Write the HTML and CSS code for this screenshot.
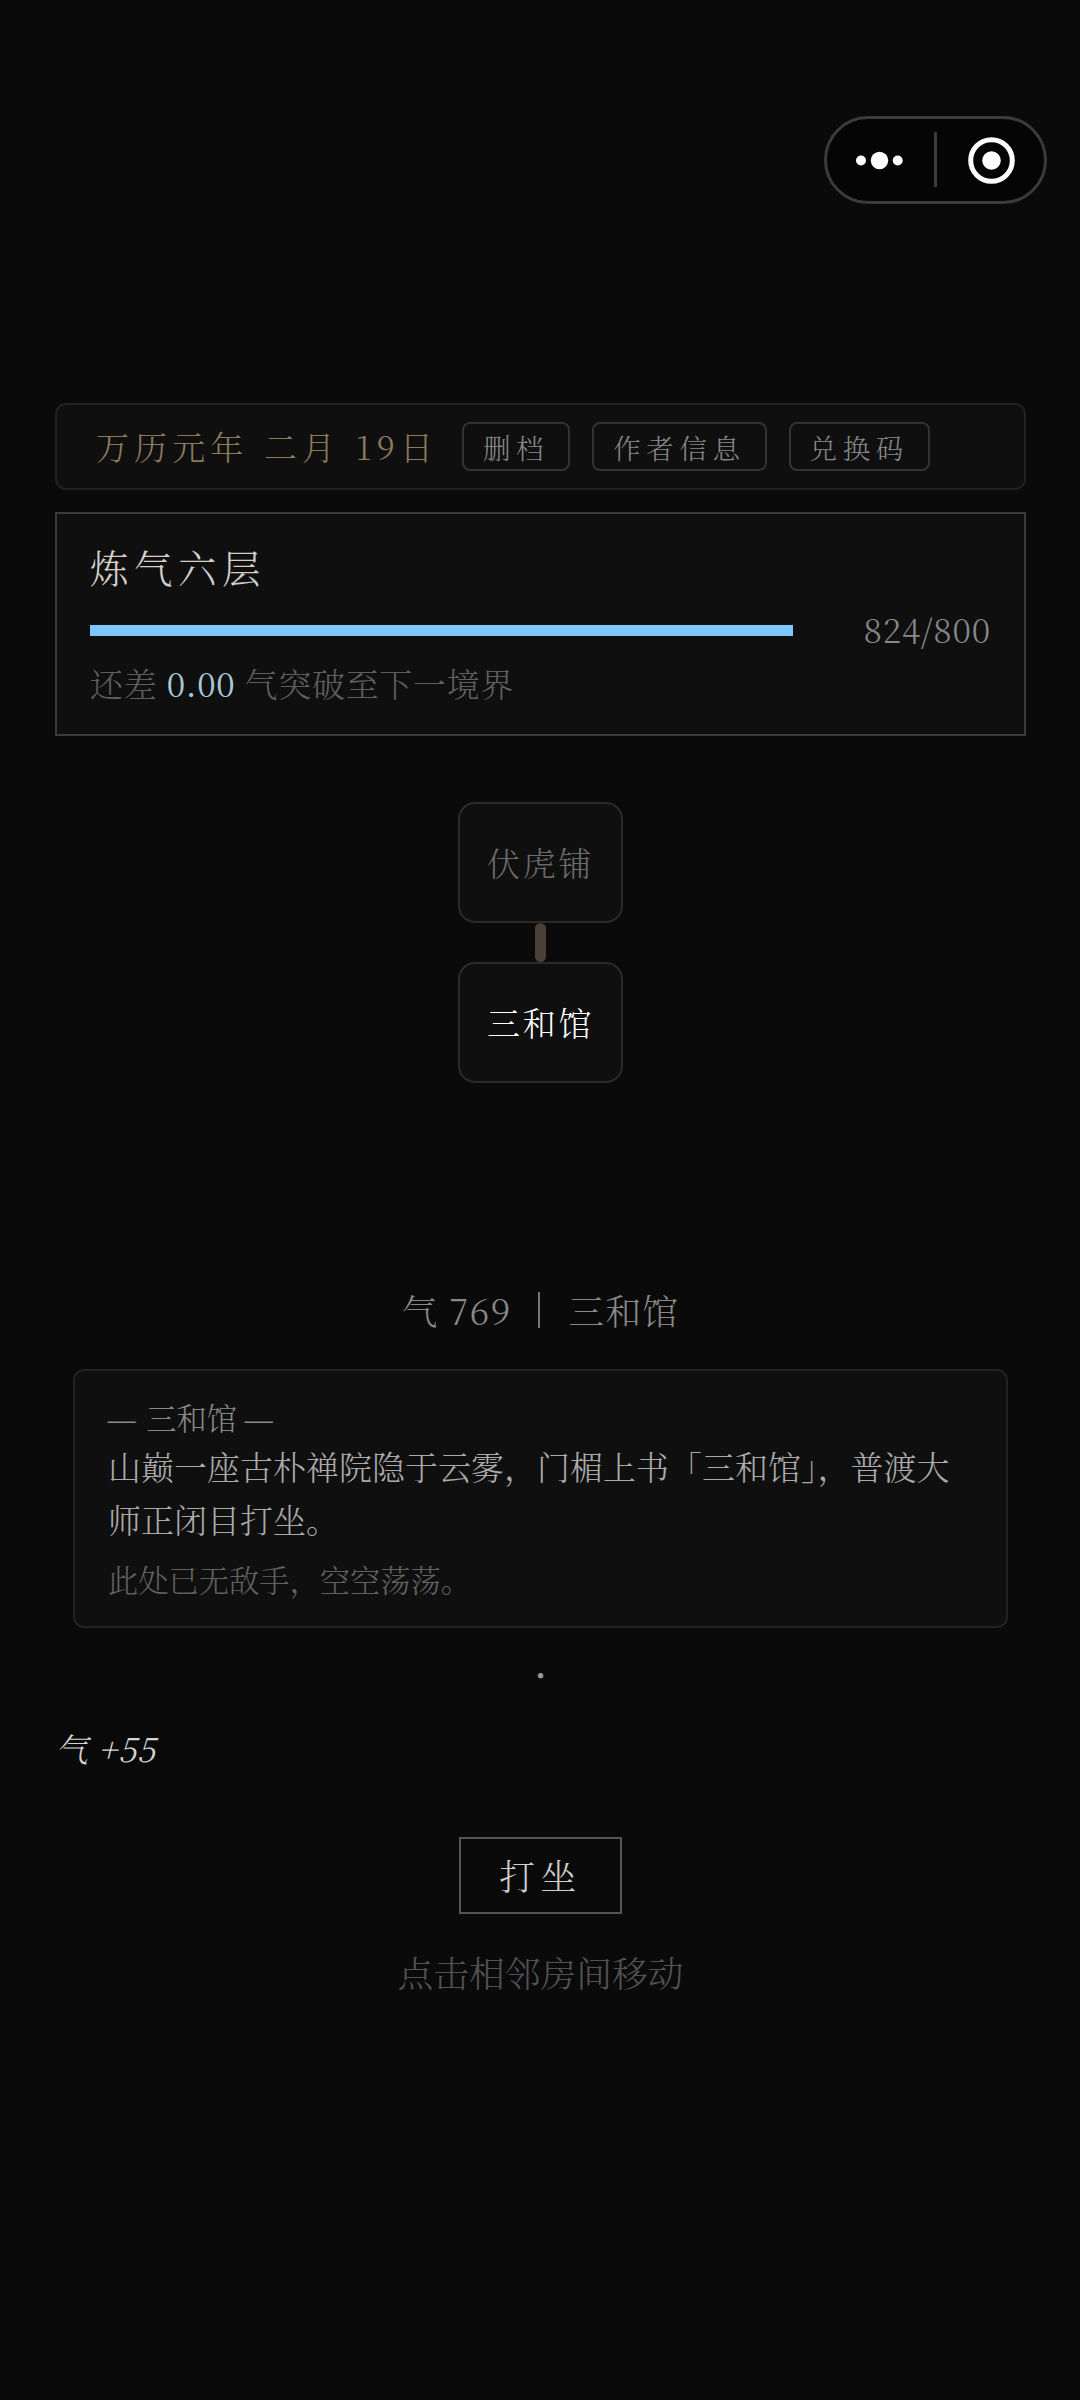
FILE: index.html
```html
<!DOCTYPE html>
<html lang="zh-CN">
<head>
<meta charset="utf-8">
<title>三和馆</title>
<link rel="stylesheet" href="styles.css">
</head>
<body>
<header class="top">
  <div class="capsule">
    <svg width="223" height="88" viewBox="0 0 223 88">
      <rect class="capsule-shell" x="1.5" y="1.5" width="220" height="85" rx="42.5"/>
      <path class="capsule-line" d="M111.5 16v55"/>
      <g class="capsule-dots"><circle cx="37" cy="44.5" r="5"/><circle cx="55.5" cy="44.5" r="8.7"/><circle cx="73.7" cy="44.5" r="5"/><circle cx="167.5" cy="44.5" r="9.3"/></g>
      <circle class="capsule-ring" cx="167.5" cy="44.5" r="20.8"/>
    </svg>
  </div>
</header>
<main class="game">
  <section class="calendar">
    <span class="date">万历元年 二月 19日</span>
    <button class="chip">删档</button>
    <button class="chip">作者信息</button>
    <button class="chip">兑换码</button>
  </section>
  <section class="realm">
    <h1 class="realm-name">炼气六层</h1>
    <div class="progress"><div class="bar"></div><span class="amount">824/800</span></div>
    <p class="remain">还差 <b class="need">0.00</b> 气突破至下一境界</p>
  </section>
  <section class="map">
    <div class="room">伏虎铺</div>
    <div class="path"></div>
    <div class="room current">三和馆</div>
  </section>
  <p class="status"><span>气 769</span><i class="rule"></i><span>三和馆</span></p>
  <section class="scene">
    <p class="scene-name"><span class="dash">—</span> 三和馆 <span class="dash">—</span></p>
    <p class="scene-text">山巅一座古朴禅院隐于云雾，门楣上书「三和馆」，普渡大师正闭目打坐。</p>
    <p class="scene-note">此处已无敌手，空空荡荡。</p>
  </section>
  <p class="pulse">·</p>
  <p class="gain">气 +55</p>
  <button class="sit">打坐</button>
  <p class="hint">点击相邻房间移动</p>
</main>
</body>
</html>
```
FILE: styles.css
```css
* { box-sizing: border-box; margin: 0; padding: 0; }
body {
  min-height: 2400px;
  background: #0a0a0a;
  color: #888;
  font-family: "Noto Serif CJK SC", "Noto Serif SC", "Noto Sans CJK SC", serif;
  font-size: 33px;
  font-weight: 300;
  line-height: 50px;
  white-space: nowrap;
}
button { background: none; font: inherit; color: inherit; }
.top { display: flex; justify-content: flex-end; height: 403px; padding: 116px 33px 0 0; }
.capsule { height: 88px; }
.capsule svg { display: block; }
.capsule-shell { fill: #050505; stroke: #3b3b3b; stroke-width: 3; }
.capsule-line { fill: none; stroke: #3b3b3b; stroke-width: 3; }
.capsule-dots { fill: #fff; }
.capsule-ring { fill: none; stroke: #fff; stroke-width: 5; }
.game { display: flex; flex-direction: column; align-items: center; padding: 0 54px 0 55px; }
.calendar {
  display: flex; align-items: center; align-self: stretch;
  height: 87px; padding-left: 39px;
  border: 2px solid #222; border-radius: 11px; background: #0f0f0f;
}
.date { width: 366px; padding-bottom: 2px; color: #8b7b5b; letter-spacing: 5.1px; word-spacing: 2px; }
.chip {
  height: 49px; margin-right: 22px; padding: 0 19px;
  border: 2px solid #333; border-radius: 8px;
  font-size: 27.5px; line-height: 46px; letter-spacing: 5.6px; color: #888;
}
.realm {
  align-self: stretch; height: 224px; margin-top: 22px; padding: 25px 33px 27px;
  border: 2px solid #3a3a3a; background: #0f0f0f;
}
.realm-name { margin-bottom: 2px; font-size: 38.5px; font-weight: 300; line-height: 56px; letter-spacing: 5.5px; color: #d4cfc9; }
.progress { display: flex; align-items: center; justify-content: space-between; height: 66px; }
.bar { width: 703px; height: 11px; background: #7ec8ff; }
.amount { padding-bottom: 2px; font-size: 33.5px; letter-spacing: .8px; }
.remain { height: 40px; line-height: 40px; letter-spacing: .7px; color: #5e5e5e; }
.need { font-weight: 400; color: #a8c8d8; }
.map { display: flex; flex-direction: column; align-items: center; margin-top: 66px; }
.room {
  width: 165px; height: 121px; border: 2px solid #2a2a2a; border-radius: 17px;
  background: #0f0f0f; color: #6a6a6a; line-height: 115px; letter-spacing: 2.75px; text-align: center;
}
.current { color: #fff; }
.path { width: 11px; height: 39px; border-radius: 6px; background: #4a4038; }
.status { display: flex; align-items: center; height: 50px; margin-top: 202px; font-size: 35.75px; letter-spacing: 1.2px; }
.rule { width: 2px; height: 36px; margin: 0 28px 0 27px; background: #777; }
.scene {
  width: 935px; height: 259px; margin-top: 34px; padding: 25px 31px 27px 33px;
  border: 2px solid #222; border-radius: 11px; background: #0f0f0f;
}
.scene-name { font-size: 30.25px; line-height: 42px; }
.dash { display: inline-block; width: 30.5px; transform: translateX(-2px) scaleX(1.18); transform-origin: left; }
.scene-text { margin-top: 1px; line-height: 53px; color: #aaa; white-space: normal; }
.scene-note { margin-top: 10px; font-size: 30.25px; line-height: 48px; color: #606060; }
.pulse { margin-top: 21px; color: #999; font-weight: 700; }
.gain { align-self: flex-start; margin-top: 24px; font-style: italic; letter-spacing: .8px; color: #d4d4d4; }
.sit {
  width: 163px; height: 77px; margin-top: 64px; padding-bottom: 2px;
  border: 2px solid #555; font-size: 35.75px; line-height: 71px; letter-spacing: 5.5px; color: #d0d0d0;
}
.hint { margin-top: 33px; font-size: 35.75px; color: #525252; }
```
